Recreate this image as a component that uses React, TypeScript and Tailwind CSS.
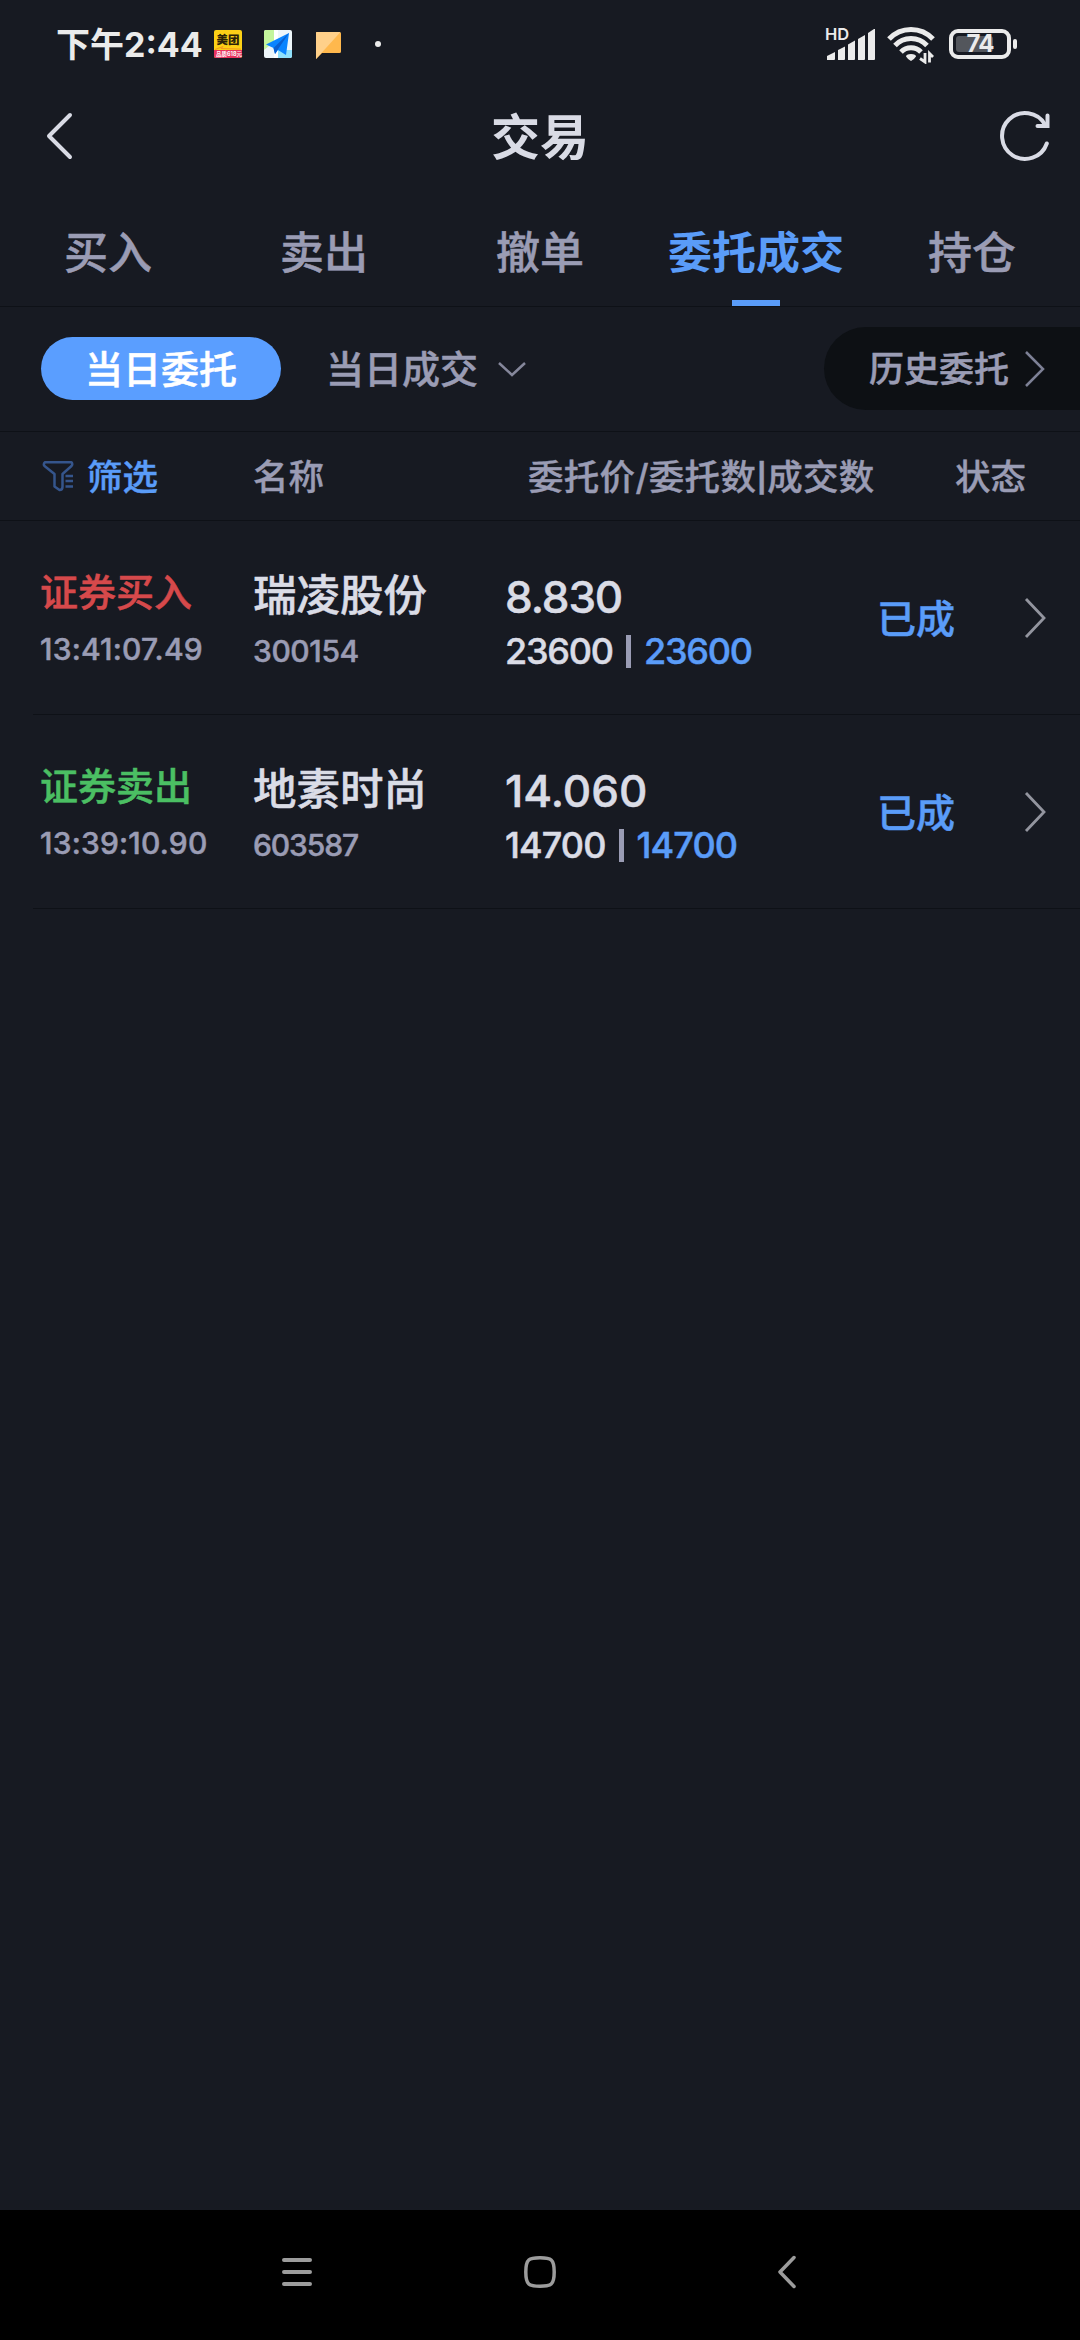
import React from 'react';

interface Order {
    id: number;
    side: string;
    sideColor: string;
    time: string;
    name: string;
    code: string;
    codeTracking: string;
    price: string;
    priceTracking: string;
    amount: string;
    filled: string;
    amountTracking: string;
    status: string;
}

const TABS = ['买入', '卖出', '撤单', '委托成交', '持仓'];

const ORDERS: Order[] = [
    {
        id: 1,
        side: '证券买入',
        sideColor: 'text-[#d6494b]',
        time: '13:41:07.49',
        name: '瑞凌股份',
        code: '300154',
        codeTracking: 'tracking-[-0.4px]',
        price: '8.830',
        priceTracking: 'tracking-[-1.1px]',
        amount: '23600',
        filled: '23600',
        amountTracking: 'tracking-[-1.2px]',
        status: '已成',
    },
    {
        id: 2,
        side: '证券卖出',
        sideColor: 'text-[#4bbf63]',
        time: '13:39:10.90',
        name: '地素时尚',
        code: '603587',
        codeTracking: 'tracking-[-1.1px]',
        price: '14.060',
        priceTracking: 'tracking-[0px]',
        amount: '14700',
        filled: '14700',
        amountTracking: 'tracking-[-0.9px]',
        status: '已成',
    },
];

const StatusBar: React.FC = () => (
    <div className="flex h-[90px] shrink-0 items-start pl-14 pr-[63px] text-[#ebebeb]">
        <div className="mt-[21px] flex h-12 w-[146px] items-center whitespace-nowrap text-[34px] font-bold leading-[48px]">
            <span>下午</span>
            <span>2:44</span>
        </div>
        <svg className="ml-3 mt-[30px] overflow-visible" width="28" height="28" viewBox="0 0 28 28">
            <rect width="28" height="28" rx="2" fill="#fcd116" />
            <path d="M0 20h28v6a2 2 0 0 1-2 2H2a2 2 0 0 1-2-2z" fill="#e8335f" />
            <path d="M1 19.5l8-3-2 2 20 .6" stroke="#f59a1c" strokeWidth="1" fill="none" />
            <text x="2.6" y="13.6" fontSize="11.5" fontWeight="900" fill="#2a2208">美团</text>
            <text x="2" y="26" fontSize="5.500" fontWeight="700" fill="#fff">品质618元</text>
        </svg>
        <svg className="ml-[22px] mt-[30px]" width="28" height="28" viewBox="0 0 28 28">
            <rect width="28" height="28" rx="2" fill="#eef6fa" />
            <path d="M2 0h8v12L0 20V2a2 2 0 0 1 2-2z" fill="#c4f59c" />
            <path d="M10 0h4v28h-4z" fill="#fff" />
            <path d="M14 20h14v6a2 2 0 0 1-2 2H14z" fill="#8fe0fb" />
            <path d="M25 3L2 14.500l7.500 3.500 1.500 6 3-4 8 5z" fill="#0a84ff" />
            <path d="M25 3L9.500 18l1.500 6 2.500-4z" fill="#0a5fd0" />
        </svg>
        <svg className="ml-[23px] mt-[31px]" width="27" height="29" viewBox="0 0 27 29">
            <path d="M1.500 1h23A1.500 1.500 0 0 1 26 2.500v18a1.500 1.500 0 0 1-1.500 1.500H7l-6 6V2.500A1.500 1.500 0 0 1 1.500 1z" fill="#ffb84d" />
            <path d="M1.500 1h24L1 28V2z" fill="#ffd08a" />
        </svg>
        <div className="ml-[33px] mt-[41px] size-[6px] rounded-full bg-[#ebebeb]" />

        <svg className="ml-auto mt-[24px]" width="53" height="38" viewBox="0 -2 53 38" fill="#ebebeb">
            <text x="1" y="14" fontSize="16.5" fontWeight="600">HD</text>
            <path d="M3 34v-4l8-4v7a1 1 0 0 1-1 1H3zM14 34V24l7-3.500V33a1 1 0 0 1-1 1zM24 34V18.500l7-4V33a1 1 0 0 1-1 1zM34 34V13l7-4v24a1 1 0 0 1-1 1zM44 34V7l6-4h1v30a1 1 0 0 1-1 1z" />
        </svg>
        <svg className="ml-[10px] mt-[26px]" width="48" height="38" viewBox="0 0 48 38" fill="none">
            <path d="M2 13a30 30 0 0 1 44 0M8 19.500a22 22 0 0 1 32 0M14 26a14 14 0 0 1 20 0" stroke="#ebebeb" strokeWidth="5" />
            <path d="M19 30.500q0-2.500 5-2.500t5 2.500q-1 2-5 4.500-4-2.500-5-4.500z" fill="#ebebeb" />
            <path d="M38 27v9l-5-3.500M42.500 36.500v-9l3.500 3.500" stroke="#ebebeb" strokeWidth="2.800" />
        </svg>
        <div className="ml-[14px] mt-[29px] flex items-center">
            <div className="relative flex h-[30px] w-[62px] items-center justify-center rounded-[9px] border-4 border-[#ebebeb]">
                <div className="absolute left-[3px] top-[3px] h-4 w-[37px] rounded-[3px] bg-[#53565c]" />
                <span className="relative text-[24px] font-bold leading-none tracking-[-1px]">74</span>
            </div>
            <div className="ml-[2px] h-[10px] w-1 rounded-sm bg-[#ebebeb]" />
        </div>
    </div>
);

const Header: React.FC = () => (
    <div className="flex h-[94px] shrink-0 items-center justify-between pl-[46px] pr-[29px] text-[#d9dbe5]">
        <svg className="-mt-1" width="34" height="50" viewBox="0 0 34 50" fill="none" stroke="currentColor" strokeWidth="4" strokeLinecap="round">
            <path d="M24 5L3 26l21 21" strokeLinejoin="round" />
        </svg>
        <h1 className="text-[49px] font-bold leading-none">交易</h1>
        <svg className="-mt-px" width="51" height="54" viewBox="0 0 51 54" fill="none" stroke="currentColor" strokeWidth="4" strokeLinecap="round">
            <path d="M46.800 33.500A23 23 0 1 1 45 14.500" />
            <path d="M47.500 5.500V16H37.500" />
        </svg>
    </div>
);

const TabBar: React.FC = () => (
    <div className="grid h-[123px] shrink-0 grid-cols-5 border-b border-[#0e1117]">
        {TABS.map((tab) => {
            const active = tab === '委托成交';
            return (
                <button key={tab} className="flex flex-col items-center justify-end">
                    <span className={`mb-[15px] text-[44px] leading-[64px] ${active ? 'font-bold text-[#5a9cf8]' : 'font-medium text-[#9a9cb4] [-webkit-text-stroke:0.5px]'}`}>
                        {tab}
                    </span>
                    <span className={`h-[6px] w-12 ${active ? 'bg-[#5a9cf8]' : ''}`} />
                </button>
            );
        })}
    </div>
);

const SubTabs: React.FC = () => (
    <div className="flex h-[125px] shrink-0 items-center border-b border-[#0e1117] pb-px pl-[41px] text-[#9a9cb4] [-webkit-text-stroke:0.5px]">
        <button className="h-[63px] w-[240px] rounded-full bg-[#5a9eff] text-[38px] font-medium leading-[62px] text-white">
            当日委托
        </button>
        <button className="ml-[45px] flex items-center text-[38px] font-medium leading-[62px]">
            当日成交
            <svg className="ml-[19px]" width="30" height="18" viewBox="0 0 30 18" fill="none" stroke="#85879b" strokeWidth="2.500">
                <path d="M2 3l13 12L28 3" />
            </svg>
        </button>
        <button className="ml-auto flex h-[83px] w-[256px] items-center rounded-l-full bg-[#0d1014] pl-[45px] text-[35px] font-medium">
            <span className="mt-px">历史委托</span>
            <svg className="ml-[15px]" width="22" height="38" viewBox="0 0 22 38" fill="none" stroke="#7d8196" strokeWidth="2.500">
                <path d="M2 2l17 17L2 36" />
            </svg>
        </button>
    </div>
);

const ListHead: React.FC = () => (
    <div className="flex h-[89px] shrink-0 items-center border-b border-[#0e1117] pl-[42px] pt-[3px] text-[35.500px] font-medium leading-[60px] text-[#9a9cb4] [-webkit-text-stroke:0.4px]">
        <div className="flex w-[211px] items-center text-[#5a9cf8]">
            <svg className="mb-[2px] mr-3" width="33" height="34" viewBox="0 0 33 34" fill="none" stroke="#35558c" strokeWidth="2.500" strokeLinejoin="round">
                <path d="M3 2.200h26.500q1.500 2 0 3.800L20.500 14v13q0 3-3 3l-5-3.500V14L2.500 6q-1.500-1.800.5-3.800z" />
                <path d="M23.500 16H31M23.500 21H31M23.500 26.500H31" />
            </svg>
            筛选
        </div>
        <div className="flex w-[275px]">名称</div>
        <div className="flex w-[427px] items-center tracking-[0.3px]">
            委托价/委托数
            <span className="w-[11px] text-center text-[28px] font-bold leading-none">|</span>
            成交数
        </div>
        <div>状态</div>
    </div>
);

const OrderRow: React.FC<{ order: Order }> = ({ order }) => (
    <div className="ml-[33px] flex h-[194px] border-b border-[#0e1117] pl-[7px] font-medium [-webkit-text-stroke:0.5px]">
        <div className="w-[213px] pt-[42px]">
            <div className={`text-[38px] leading-[58px] ${order.sideColor}`}>{order.side}</div>
            <div className="mt-2 text-[30px] leading-10 tracking-[0.2px] text-[#9a9cb4]">{order.time}</div>
        </div>
        <div className="w-[252px] pt-[45px]">
            <div className="text-[43.500px] leading-[58px] text-[#dadce6]">{order.name}</div>
            <div className={`mt-[7px] text-[30px] leading-10 text-[#9a9cb4] ${order.codeTracking}`}>{order.code}</div>
        </div>
        <div className="w-[372px] pt-[51px] text-[#dadce6]">
            <div className={`text-[44px] leading-[50px] ${order.priceTracking}`}>{order.price}</div>
            <div className={`mt-1 flex items-center text-[36px] leading-[50px] ${order.amountTracking}`}>
                {order.amount}
                <span className="mx-[13px] h-[33px] w-[5px] bg-[#9a9cb4]" />
                <span className="text-[#5a9cf8]">{order.filled}</span>
            </div>
        </div>
        <div className="flex flex-1 items-center text-[39px] text-[#5a9cf8]">
            <span className="mt-[3px]">{order.status}</span>
            <svg className="ml-[69px]" width="24" height="42" viewBox="0 0 24 42" fill="none" stroke="#93959f" strokeWidth="2.800">
                <path d="M2 2l18 19L2 40" />
            </svg>
        </div>
    </div>
);

const NavBar: React.FC = () => (
    <div className="flex h-[130px] shrink-0 items-center bg-black pb-[6px] pl-[281px] text-[#9c9c9c]">
        <svg width="32" height="32" viewBox="0 0 32 32" stroke="currentColor" strokeWidth="4" strokeLinecap="round">
            <path d="M3 4h26M3 16h26M3 28h26" />
        </svg>
        <svg className="ml-[210px]" width="34" height="34" viewBox="0 0 34 34" fill="none" stroke="currentColor" strokeWidth="3.500">
            <path d="M17 2.800c11 0 14.200 1 14.200 14.200S28 31.200 17 31.200 2.800 30 2.800 17 6 2.800 17 2.800z" />
        </svg>
        <svg className="ml-[221px]" width="18" height="34" viewBox="0 0 18 34" fill="none" stroke="currentColor" strokeWidth="3.500" strokeLinecap="round" strokeLinejoin="round">
            <path d="M16 2.500L2 17l14 14.500" />
        </svg>
    </div>
);

export default function App() {
    return (
        <div className="flex h-[2340px] w-[1080px] flex-col overflow-hidden bg-[#171a22] font-[Inter,'Noto_Sans_CJK_SC',sans-serif]">
            <StatusBar />
            <Header />
            <TabBar />
            <SubTabs />
            <ListHead />
            <div className="flex-1">
                {ORDERS.map((order) => (
                    <OrderRow key={order.id} order={order} />
                ))}
            </div>
            <NavBar />
        </div>
    );
}
